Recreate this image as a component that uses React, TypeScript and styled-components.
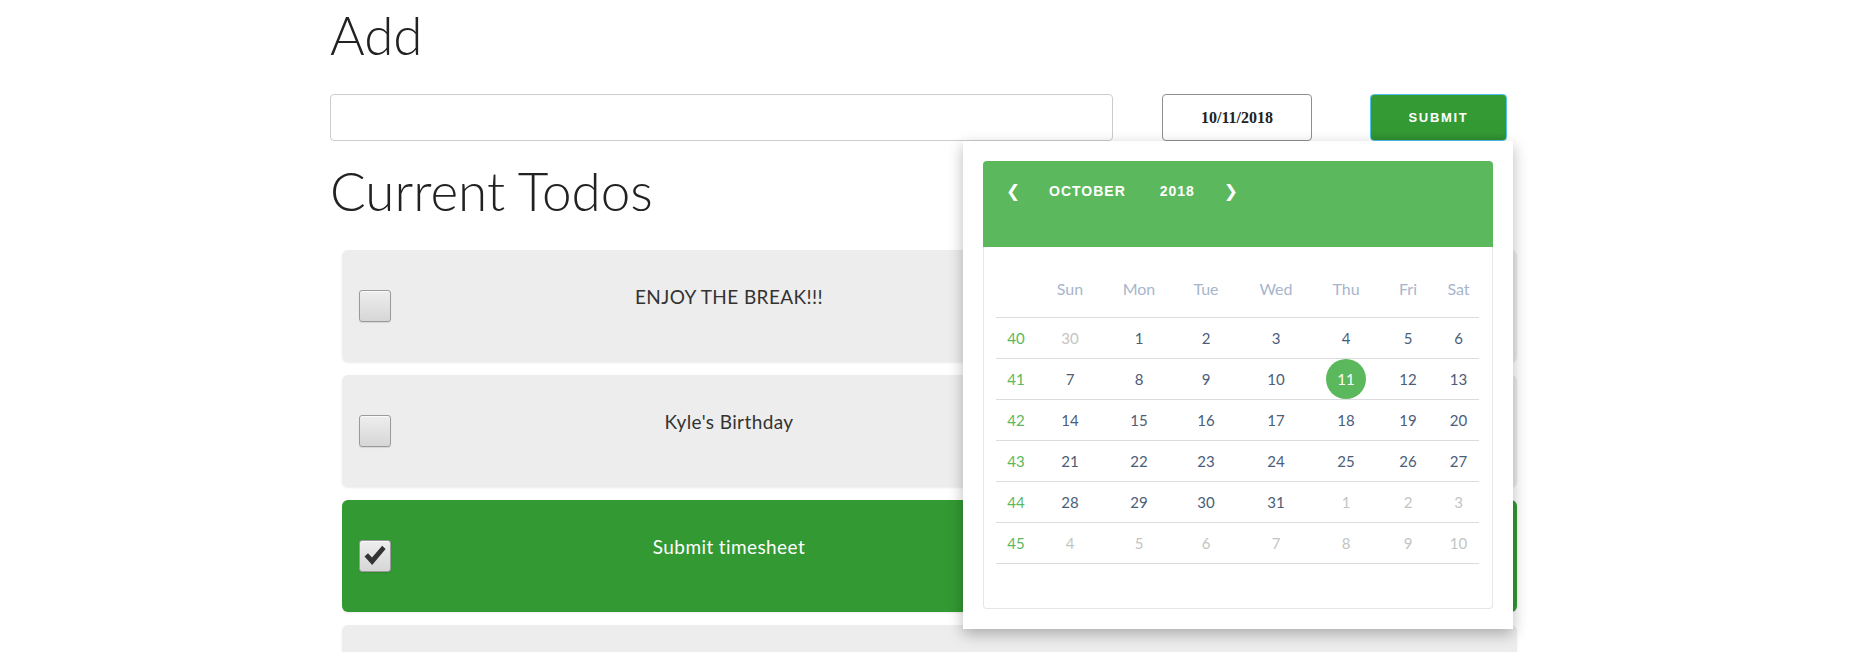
import React from "react";
import styled, { createGlobalStyle } from "styled-components";

const GlobalStyle = createGlobalStyle`
  html, body { margin: 0; padding: 0; background: #ffffff; }
  body { font-family: Lato, "Open Sans", "Noto Sans", sans-serif; color: #333; overflow: hidden; }
  * { box-sizing: border-box; }
`;

const Page = styled.div`
  padding-left: 330px;
  width: 1856px;
  height: 652px;
  overflow: hidden;
`;

const Title = styled.h1<{ $gap: number }>`
  margin: ${(p) => p.$gap}px 0 0 0;
  font-family: Lato, "Open Sans", sans-serif;
  font-weight: 300;
  font-size: 53px;
  line-height: 60px;
  height: 60px;
  color: #222;
  letter-spacing: 0;
`;

const Form = styled.form`
  position: relative;
  display: flex;
  align-items: stretch;
  margin-top: 29px;
  height: 47px;
  width: 1177px;
`;

const TextInput = styled.input`
  width: 783px;
  height: 47px;
  border: 1px solid #cccccc;
  border-radius: 4px;
  background: #fff;
  outline: none;
`;

const DateInput = styled.input`
  width: 150px;
  height: 47px;
  margin-left: 49px;
  border: 1px solid #8f8f8f;
  border-radius: 4px;
  background: #fff;
  text-align: center;
  font-family: "Liberation Serif", "Times New Roman", serif;
  font-weight: 700;
  font-size: 16px;
  color: #222;
  outline: none;
`;

const SubmitButton = styled.button`
  width: 137px;
  height: 47px;
  margin-left: 58px;
  border: 1px solid #4fc1e9;
  border-radius: 4px;
  background: linear-gradient(#349b35 0%, #339933 85%, #2e8d2f 100%);
  color: #fff;
  font-family: "Liberation Sans", Arial, sans-serif;
  font-weight: 700;
  font-size: 13px;
  letter-spacing: 1.7px;
  padding: 0;
`;

const Popup = styled.div`
  position: absolute;
  left: 633px;
  top: 100%;
  width: 550px;
  height: 488px;
  padding: 20px;
  background: #fff;
  box-shadow: 0 5px 14px rgba(0, 0, 0, 0.28);
  z-index: 10;
`;

const CalHeader = styled.div`
  height: 86px;
  background: #5cb85c;
  border-radius: 4px 4px 0 0;
  display: flex;
  align-items: flex-start;
  padding: 20px 0 0 20px;
  gap: 26px;
  color: #fff;
  font-family: "Liberation Sans", Arial, sans-serif;
  font-weight: 700;
`;

const NavArrow = styled.span`
  width: 20px;
  height: 20px;
  display: flex;
  align-items: center;
  justify-content: center;
  font-family: "DejaVu Sans", sans-serif;
  font-weight: 700;
  font-size: 17px;
  line-height: 20px;
`;

const HeadLabel = styled.span<{ $extra?: number }>`
  font-size: 14px;
  letter-spacing: 1px;
  line-height: 20px;
  margin-left: ${(p) => p.$extra ?? 0}px;
`;

const CalBody = styled.div`
  border: 1px solid #e6e6e6;
  border-top: none;
  border-radius: 0 0 4px 4px;
  padding: 0 13px 44px 12px;
`;

const Table = styled.table`
  width: 483px;
  border-collapse: collapse;
  table-layout: fixed;
  font-family: Lato, "Open Sans", sans-serif;
`;

const Th = styled.th`
  padding: 32px 0 18px;
  line-height: 20px;
  font-size: 16px;
  font-weight: 400;
  color: #a7b5cc;
  text-align: center;
  border-bottom: 1px solid #dcdcdc;
`;

const Td = styled.td`
  padding: 0;
  height: 40px;
  text-align: center;
  border-bottom: 1px solid #dcdcdc;
  vertical-align: middle;
`;

const Day = styled.span<{ $tone: "week" | "cur" | "other" | "sel" }>`
  display: inline-flex;
  width: 40px;
  height: 40px;
  align-items: center;
  justify-content: center;
  border-radius: 50%;
  font-size: 15px;
  background: ${(p) => (p.$tone === "sel" ? "#5cb85c" : "transparent")};
  color: ${(p) =>
    p.$tone === "week"
      ? "#5cb85c"
      : p.$tone === "cur"
      ? "#4b5d78"
      : p.$tone === "other"
      ? "#c4c4c4"
      : "#ffffff"};
`;

const TodoList = styled.div`
  margin-top: 29px;
  margin-left: 12px;
  width: 1175px;
  display: flex;
  flex-direction: column;
  gap: 13px;
`;

const TodoRow = styled.div<{ $done?: boolean }>`
  height: 112px;
  flex-shrink: 0;
  border-radius: 6px;
  background: ${(p) => (p.$done ? "#339933" : "#ededed")};
  color: ${(p) => (p.$done ? "#ffffff" : "#333333")};
  box-shadow: 0 1px 2px rgba(0, 0, 0, 0.08);
  display: grid;
  grid-template-columns: 98px 578px 1fr;
`;

const CheckCell = styled.div`
  display: flex;
  align-items: center;
  padding-left: 17px;
`;

const CheckBox = styled.span`
  width: 32px;
  height: 32px;
  border: 1px solid #9a9a9a;
  border-radius: 3px;
  background: linear-gradient(#eeeeee, #d6d6d6);
  box-shadow: inset 0 1px 0 rgba(255, 255, 255, 0.7), 0 1px 1px rgba(0, 0, 0, 0.1);
  display: flex;
  align-items: center;
  justify-content: center;
`;

const TodoText = styled.div`
  padding-top: 34px;
  text-align: center;
  font-family: Lato, "Open Sans", sans-serif;
  font-size: 19px;
  letter-spacing: 0.4px;
  line-height: 26px;
`;

type Cell = { n: number; t: "cur" | "other" | "sel" };

const weeks: { w: number; days: Cell[] }[] = [
  { w: 40, days: [{ n: 30, t: "other" }, ...[1, 2, 3, 4, 5, 6].map((n) => ({ n, t: "cur" as const }))] },
  { w: 41, days: [7, 8, 9, 10, 11, 12, 13].map((n) => ({ n, t: n === 11 ? ("sel" as const) : ("cur" as const) })) },
  { w: 42, days: [14, 15, 16, 17, 18, 19, 20].map((n) => ({ n, t: "cur" as const })) },
  { w: 43, days: [21, 22, 23, 24, 25, 26, 27].map((n) => ({ n, t: "cur" as const })) },
  {
    w: 44,
    days: [
      ...[28, 29, 30, 31].map((n) => ({ n, t: "cur" as const })),
      ...[1, 2, 3].map((n) => ({ n, t: "other" as const })),
    ],
  },
  { w: 45, days: [4, 5, 6, 7, 8, 9, 10].map((n) => ({ n, t: "other" as const })) },
];

const colWidths = [40, 68, 70, 64, 76, 64, 60, 41];
const dayNames = ["Sun", "Mon", "Tue", "Wed", "Thu", "Fri", "Sat"];

const todos = [
  { id: 1, text: "ENJOY THE BREAK!!!", done: false },
  { id: 2, text: "Kyle's Birthday", done: false },
  { id: 3, text: "Submit timesheet", done: true },
  { id: 4, text: "", done: false },
];

const Check = () => (
  <svg width="24" height="24" viewBox="0 0 24 24">
    <path d="M1.5 12.5 L5 9.2 L9 13.4 L19.2 1.8 L22.6 5 L9.2 21 Z" fill="#333" />
  </svg>
);

export default function App() {
  return (
    <>
      <GlobalStyle />
      <Page>
        <Title $gap={5}>Add</Title>
        <Form onSubmit={(e) => e.preventDefault()}>
          <TextInput type="text" />
          <DateInput type="text" defaultValue="10/11/2018" />
          <SubmitButton type="submit">SUBMIT</SubmitButton>
          <Popup>
            <CalHeader>
              <NavArrow>❮</NavArrow>
              <HeadLabel>OCTOBER</HeadLabel>
              <HeadLabel $extra={8}>2018</HeadLabel>
              <NavArrow>❯</NavArrow>
            </CalHeader>
            <CalBody>
              <Table>
                <colgroup>
                  {colWidths.map((w, i) => (
                    <col key={i} style={{ width: w }} />
                  ))}
                </colgroup>
                <thead>
                  <tr>
                    <Th />
                    {dayNames.map((d) => (
                      <Th key={d}>{d}</Th>
                    ))}
                  </tr>
                </thead>
                <tbody>
                  {weeks.map((wk) => (
                    <tr key={wk.w}>
                      <Td>
                        <Day $tone="week">{wk.w}</Day>
                      </Td>
                      {wk.days.map((d, i) => (
                        <Td key={i}>
                          <Day $tone={d.t}>{d.n}</Day>
                        </Td>
                      ))}
                    </tr>
                  ))}
                </tbody>
              </Table>
            </CalBody>
          </Popup>
        </Form>
        <Title $gap={20}>Current Todos</Title>
        <TodoList>
          {todos.map((t) => (
            <TodoRow key={t.id} $done={t.done}>
              <CheckCell>
                <CheckBox>{t.done && <Check />}</CheckBox>
              </CheckCell>
              <TodoText>{t.text}</TodoText>
              <div />
            </TodoRow>
          ))}
        </TodoList>
      </Page>
    </>
  );
}
